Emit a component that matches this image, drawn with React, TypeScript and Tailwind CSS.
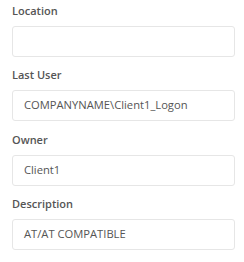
const fields = [
  { label: 'Location', value: '' },
  { label: 'Last User', value: 'COMPANYNAME\\Client1_Logon' },
  { label: 'Owner', value: 'Client1' },
  { label: 'Description', value: 'AT/AT COMPATIBLE' },
];

export default function App() {
  return (
    <div className="w-[244px] h-[262px] bg-white pt-px pl-[12px] pr-[9px] font-['Open_Sans',sans-serif] flex flex-col gap-[8.4px]">
      {fields.map((f) => (
        <div key={f.label} className="flex flex-col">
          <label className="h-[20px] leading-[20px] mb-[5px] text-[11px] font-semibold text-[#555]">
            {f.label}
          </label>
          <div className="h-[31px] border border-[#e6e6e6] rounded-[3px] px-[11px] flex items-center text-[11.2px] text-[#555]">
            {f.value}
          </div>
        </div>
      ))}
    </div>
  );
}
